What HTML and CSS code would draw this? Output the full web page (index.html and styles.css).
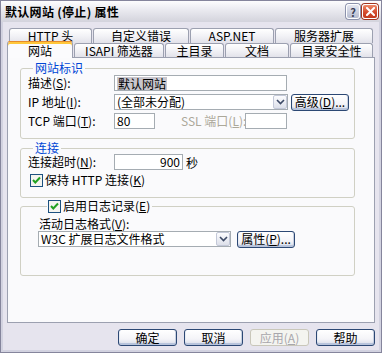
FILE: index.html
```html
<!DOCTYPE html>
<html>
<head>
<meta charset="utf-8">
<link rel="stylesheet" href="styles.css">
</head>
<body>
<div class="window">
  <div class="titlebar">
    <span class="title">默认网站 (停止) 属性</span>
    <div class="tbtns">
      <span class="tbtn help">?</span>
      <span class="tbtn close"><svg width="9" height="9" viewBox="0 0 9 9"><path d="M1 1 L8 8 M8 1 L1 8" stroke="#fff" stroke-width="2" stroke-linecap="square"/></svg></span>
    </div>
  </div>
  <div class="client">
    <div class="tabs">
      <div class="tabrow back">
        <span class="tab w83">HTTP 头</span>
        <span class="tab w96">自定义错误</span>
        <span class="tab w84">ASP.NET</span>
        <span class="tab w98">服务器扩展</span>
      </div>
      <div class="tabrow front">
        <span class="tab sel w66">网站</span>
        <span class="tab w90">ISAPI 筛选器</span>
        <span class="tab w59">主目录</span>
        <span class="tab w64">文档</span>
        <span class="tab w83">目录安全性</span>
      </div>
    </div>
    <div class="page">
      <fieldset class="grp g1">
        <legend>网站标识</legend>
        <div class="row">
          <span class="lbl">描述(<u>S</u>):</span>
          <span class="edit w173"><span class="hl">默认网站</span></span>
        </div>
        <div class="row">
          <span class="lbl">IP 地址(<u>I</u>):</span>
          <span class="combo w174"><span class="ctext">(全部未分配)</span><span class="arrow"><svg width="9" height="6" viewBox="0 0 9 6"><path d="M1 1 L4.5 4.5 L8 1" fill="none" stroke="#3D4A66" stroke-width="1.6"/></svg></span></span>
          <span class="btn w58 adv">高级(<u>D</u>)...</span>
        </div>
        <div class="row">
          <span class="lbl">TCP 端口(<u>T</u>):</span>
          <span class="edit w41">80</span>
          <span class="lbl dis ssl">SSL 端口(<u>L</u>):</span>
          <span class="edit w42"></span>
        </div>
      </fieldset>
      <fieldset class="grp g2">
        <legend>连接</legend>
        <div class="row">
          <span class="lbl">连接超时(<u>N</u>):</span>
          <span class="edit w69 num">900</span>
          <span class="unit">秒</span>
        </div>
        <div class="row">
          <span class="chk"><svg width="13" height="13" viewBox="0 0 13 13"><rect x="0.5" y="0.5" width="12" height="12" fill="#F4F4F0" stroke="#1C5180"/><path d="M3 6 L5.3 8.5 L10 3.5" fill="none" stroke="#21A121" stroke-width="2"/></svg></span>
          <span class="ctxt">保持 HTTP 连接(<u>K</u>)</span>
        </div>
      </fieldset>
      <fieldset class="grp g3">
        <legend class="chklegend"><span class="chk"><svg width="13" height="13" viewBox="0 0 13 13"><rect x="0.5" y="0.5" width="12" height="12" fill="#F4F4F0" stroke="#1C5180"/><path d="M3 6 L5.3 8.5 L10 3.5" fill="none" stroke="#21A121" stroke-width="2"/></svg></span><span class="ctxt">启用日志记录(<u>E</u>)</span></legend>
        <div class="sublbl">活动日志格式(<u>V</u>):</div>
        <div class="row">
          <span class="combo w193"><span class="ctext">W3C 扩展日志文件格式</span><span class="arrow"><svg width="9" height="6" viewBox="0 0 9 6"><path d="M1 1 L4.5 4.5 L8 1" fill="none" stroke="#3D4A66" stroke-width="1.6"/></svg></span></span>
          <span class="btn w58 prop">属性(<u>P</u>)...</span>
        </div>
      </fieldset>
    </div>
    <div class="buttons">
      <span class="btn w59">确定</span>
      <span class="btn w59">取消</span>
      <span class="btn w59 disabled">应用(<u>A</u>)</span>
      <span class="btn w59">帮助</span>
    </div>
  </div>
</div>
</body>
</html>
```
FILE: styles.css
```css
* { box-sizing: border-box; }
html, body { margin: 0; padding: 0; background: #fff; }
body {
  font-family: "Noto Sans CJK SC", "Liberation Sans", sans-serif;
  font-size: 12px;
  color: #000;
}
u { text-decoration: underline; text-underline-offset: 1px; }

.window {
  width: 382px;
  height: 353px;
  border: 1px solid #85859C;
  display: flex;
  flex-direction: column;
  background: #E6E4EE;
}
.titlebar {
  height: 21px;
  flex: none;
  display: flex;
  align-items: center;
  justify-content: space-between;
  padding: 0 3px 0 4px;
  background: linear-gradient(#FDFDFE, #E9E9EF 45%, #D3D3DC);
}
.title {
  font-weight: bold;
  font-size: 12px;
  line-height: 14px;
  letter-spacing: 0.3px;
}
.tbtns { display: flex; gap: 2px; align-items: center; }
.tbtn {
  width: 15px;
  height: 15px;
  border: 1px solid #fff;
  border-radius: 3px;
  display: flex;
  align-items: center;
  justify-content: center;
}
.help {
  width: 14px;
  background: linear-gradient(#E4E6F0, #B6BCD0);
  box-shadow: 0 0 0 1px #8C92AC;
  font-weight: bold;
  font-size: 11px;
  color: #3A3F55;
  line-height: 12px;
}
.close {
  width: 16px;
  background: linear-gradient(#EE8A6A, #D2482A 60%, #C23A1E);
  box-shadow: 0 0 0 1px #A03520;
}

.client {
  flex: 1;
  border: 2px solid #D2D2E0;
  border-top: 0;
  padding: 6px 4px 4px 4px;
  display: flex;
  flex-direction: column;
}

.tabs { flex: none; height: 29px; display: flex; flex-direction: column; }
.tabrow { display: flex; gap: 1px; }
.tabrow.back { height: 15px; margin-left: 2px; }
.tabrow.front { height: 14px; }
.tab {
  display: flex;
  align-items: center;
  justify-content: center;
  border: 1px solid #9CA0B0;
  border-bottom: 0;
  border-radius: 3px 3px 0 0;
  background: linear-gradient(#FFFFFF, #F2F2F6 50%, #E2E2EA);
  font-size: 12px;
  line-height: 12px;
  white-space: nowrap;
}
.tab.sel {
  position: relative;
  z-index: 1;
  margin-top: -2px;
  height: 17px;
  background: #FBFBFD;
  border-color: #9CA0B0;
  box-shadow: inset 0 2px 0 #FFC83C;
  border-top-color: #E68B2C;
  padding-top: 1px;
}
.w41 { width: 41px; } .w42 { width: 42px; } .w58 { width: 58px; } .w59 { width: 59px; }
.w64 { width: 64px; } .w66 { width: 66px; } .w69 { width: 69px; } .w83 { width: 83px; }
.w84 { width: 84px; } .w90 { width: 90px; } .w96 { width: 96px; } .w98 { width: 98px; }
.w173 { width: 173px; } .w174 { width: 174px; } .w193 { width: 193px; }

.page {
  flex: 1;
  border: 1px solid #9CA0B0;
  background: #FAFAFC;
  padding: 4px 19px 0 12px;
}

.grp {
  margin: 0;
  border: 1px solid #D0D0C4;
  border-radius: 3px;
  min-width: 0;
}
.grp legend {
  margin-left: 5px;
  padding: 0 2px;
  color: #0046D5;
  line-height: 12px;
  font-size: 12px;
}
.g1 { padding: 1px 0 9px 7px; }
.g2 { margin-top: 3px; padding: 0 0 9px 7px; }
.g3 { margin-top: 1px; padding: 0 0 28px 17px; }
.g3 legend.chklegend {
  margin-left: 9px;
  padding: 0 2px 0 1px;
  display: flex;
  align-items: center;
  height: 14px;
  color: #000;
}
.row { display: flex; align-items: center; height: 16px; }
.g1 .row + .row { margin-top: 3px; }
.g2 .row + .row { margin-top: 2px; }
.lbl { width: 86px; flex: none; white-space: nowrap; line-height: 14px; }
.lbl.dis { color: #ACA899; }
.lbl.ssl { width: 64px; margin-left: 26px; }
.edit {
  height: 16px;
  border: 1px solid #A5ACB2;
  background: #fff;
  padding: 0 2px;
  line-height: 14px;
  display: flex;
  align-items: center;
}
.edit.num { justify-content: flex-end; }
.hl { background: #C8C6CE; padding: 0 1px; line-height: 13px; }
.unit { margin-left: 3px; }
.combo {
  height: 16px;
  border: 1px solid #A5ACB2;
  background: #fff;
  display: flex;
  align-items: center;
  justify-content: space-between;
  padding-left: 2px;
}
.ctext { line-height: 14px; white-space: nowrap; }
.arrow {
  width: 14px;
  height: 14px;
  border: 1px solid #C3C8D8;
  border-radius: 2px;
  background: linear-gradient(#FCFCFE, #DDE0EA);
  display: flex;
  align-items: center;
  justify-content: center;
}
.btn {
  height: 17px;
  border: 1px solid #2C4874;
  border-radius: 3px;
  background: linear-gradient(#FFFFFF, #F4F4F8 60%, #D8DCE8);
  box-shadow: inset 0 -2px 0 #B8C4DC, inset 1px 0 0 #E8ECF4, inset -1px 0 0 #C8D0E0;
  display: flex;
  align-items: center;
  justify-content: center;
  white-space: nowrap;
  line-height: 14px;
}
.btn.adv { margin-left: 3px; }
.btn.prop { margin-left: 6px; }
.chk { width: 13px; height: 13px; flex: none; display: flex; }
.chk svg { display: block; }
.g2 .row .chk { margin-left: 2px; }
.ctxt { margin-left: 2px; line-height: 14px; white-space: nowrap; }
.sublbl { margin-top: 3px; height: 15px; line-height: 15px; margin-left: 1px; }

.buttons {
  flex: none;
  margin-top: 6px;
  display: flex;
  justify-content: flex-end;
  gap: 7px;
}
.buttons .btn { font-size: 12px; }
.btn.disabled {
  border-color: #C9C7BA;
  color: #A8A6AC;
  box-shadow: none;
  background: #F4F4F0;
}
```
